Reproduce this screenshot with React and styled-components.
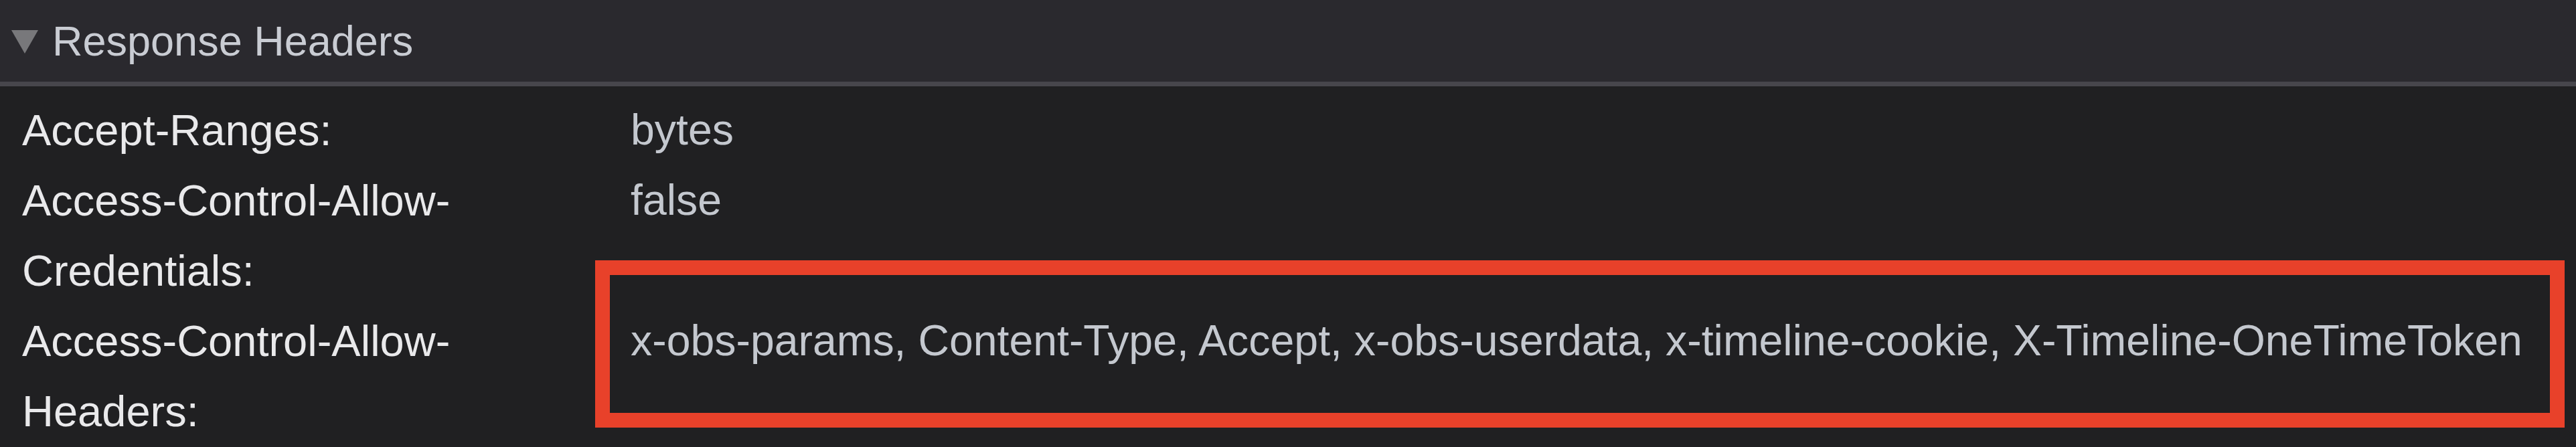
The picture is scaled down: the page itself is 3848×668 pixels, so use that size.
import React from 'react';
import styled, { createGlobalStyle } from 'styled-components';

const GlobalStyle = createGlobalStyle`
    html, body {
        margin: 0;
        padding: 0;
        background: #202022;
    }
    body {
        font-family: "Liberation Sans", Arial, Helvetica, sans-serif;
        -webkit-font-smoothing: antialiased;
    }
`

const headers = [
    { name: 'Accept-Ranges:', value: 'bytes' },
    { name: 'Access-Control-Allow-Credentials:', value: 'false' },
    {
        name: 'Access-Control-Allow-Headers:',
        value: 'x-obs-params, Content-Type, Accept, x-obs-userdata, x-timeline-cookie, X-Timeline-OneTimeToken',
        marked: true,
    },
];

const Arrow = () => (
    <svg width="40" height="35" viewBox="0 0 40 35">
        <polygon points="0,0 40,0 20,35" fill="#78787b" />
    </svg>
);

class App extends React.Component {
    render() {
        return (
            <Panel>
                <GlobalStyle />
                <SectionHeader>
                    <Arrow />
                    <Title>Response Headers</Title>
                </SectionHeader>
                <HeaderList>
                    {headers.map((h) => (
                        <React.Fragment key={h.name}>
                            <Name>{h.name}</Name>
                            <Value>
                                {h.value}
                                {h.marked && <Highlight />}
                            </Value>
                        </React.Fragment>
                    ))}
                </HeaderList>
            </Panel>
        );
    }
}

const Panel = styled.div`
    width: 100%;
    height: 668px;
    overflow: hidden;
    background: #202022;
`

const SectionHeader = styled.div`
    display: flex;
    align-items: center;
    gap: 21px;
    height: 122px;
    padding-left: 17px;
    background: #2a292e;
    border-bottom: 7px solid #47464c;
    svg {
        margin-top: 2px;
    }
`

const Title = styled.span`
    font-size: 63px;
    color: #c9ccd3;
    white-space: nowrap;
`

const HeaderList = styled.div`
    display: grid;
    grid-template-columns: 909px 1fr;
    padding: 13px 0 0 33px;
    font-size: 64.4px;
    line-height: 105px;
`

const Name = styled.div`
    color: #e9e9eb;
    font-size: 65px;
    padding-right: 150px;
`

const Value = styled.div`
    position: relative;
    color: #c4c8cf;
    white-space: nowrap;
`

const Highlight = styled.div`
    position: absolute;
    top: -68px;
    left: -53px;
    width: 2942px;
    height: 250px;
    box-sizing: border-box;
    border: 22px solid #e8412a;
    pointer-events: none;
`

export default App;
